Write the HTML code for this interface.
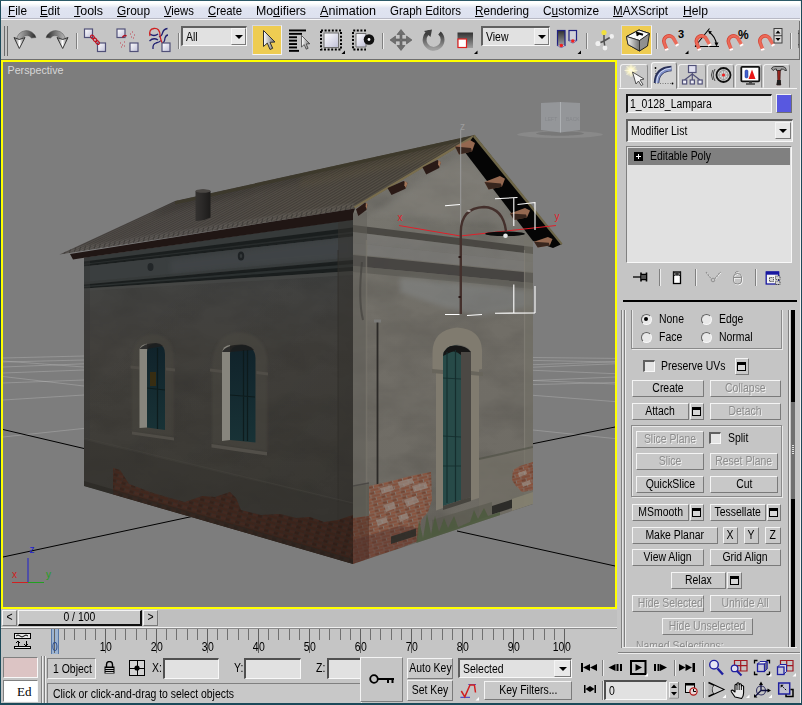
<!DOCTYPE html><html><head><meta charset="utf-8"><title>3ds Max</title><style>
html,body{margin:0;padding:0;}
body{width:802px;height:705px;overflow:hidden;background:#c5c5c5;font-family:"Liberation Sans",sans-serif;font-size:11px;color:#000;position:relative;}
.a{position:absolute;box-sizing:border-box;}
.t{position:absolute;white-space:nowrap;line-height:1;transform:scaleX(.87);transform-origin:0 0;}
.sx{display:inline-block;transform:scaleX(.87);transform-origin:50% 50%;}
.menu{transform:scaleX(.91);}
.btn{position:absolute;box-sizing:border-box;background:#c8c8c8;border:1px solid;border-color:#f4f4f4 #7a7a7a #7a7a7a #f4f4f4;text-align:center;white-space:nowrap;font-size:12px;}
.btn.dis{color:#8c8c8c;text-shadow:1px 1px 0 #f0f0f0;}
.fld{position:absolute;box-sizing:border-box;background:#e1e1e1;border:1px solid;border-color:#505050 #f8f8f8 #f8f8f8 #505050;}
.grp{position:absolute;box-sizing:border-box;border:1px solid #8a8a8a;box-shadow:1px 1px 0 #e8e8e8, inset 1px 1px 0 #e8e8e8;}
.vs{position:absolute;width:1px;background:#808080;box-shadow:1px 0 0 #ececec;}
u{text-decoration:underline;}
</style></head><body>
<div class="a" style="left:0;top:0;width:802px;height:21px;background:linear-gradient(#ffffff 0,#ffffff 3px,#eef1f7 6px,#e0e4f1 8px,#dde1ef 18.500px,#b9bac6 18.500px,#b9bac6 19.500px,#f6f6f8 19.500px,#f6f6f8 20.500px,#c5c5c5 20.500px);"></div>
<span class="t" style="left:8px;top:4px;font-size:13px;transform:scaleX(0.905);"><u>F</u>ile</span>
<span class="t" style="left:40px;top:4px;font-size:13px;transform:scaleX(0.892);"><u>E</u>dit</span>
<span class="t" style="left:74px;top:4px;font-size:13px;transform:scaleX(0.956);"><u>T</u>ools</span>
<span class="t" style="left:117px;top:4px;font-size:13px;transform:scaleX(0.913);"><u>G</u>roup</span>
<span class="t" style="left:164px;top:4px;font-size:13px;transform:scaleX(0.869);"><u>V</u>iews</span>
<span class="t" style="left:208px;top:4px;font-size:13px;transform:scaleX(0.872);"><u>C</u>reate</span>
<span class="t" style="left:256px;top:4px;font-size:13px;transform:scaleX(0.948);">Mo<u>d</u>ifiers</span>
<span class="t" style="left:320px;top:4px;font-size:13px;transform:scaleX(0.969);"><u>A</u>nimation</span>
<span class="t" style="left:390px;top:4px;font-size:13px;transform:scaleX(0.885);">Graph Editors</span>
<span class="t" style="left:475px;top:4px;font-size:13px;transform:scaleX(0.9);"><u>R</u>endering</span>
<span class="t" style="left:543px;top:4px;font-size:13px;transform:scaleX(0.912);">C<u>u</u>stomize</span>
<span class="t" style="left:613px;top:4px;font-size:13px;transform:scaleX(0.895);"><u>M</u>AXScript</span>
<span class="t" style="left:683px;top:4px;font-size:13px;transform:scaleX(0.936);"><u>H</u>elp</span>
<div class="a" style="left:0;top:21px;width:802px;height:39px;background:#c5c5c5;border-bottom:1px solid #6e6e6e;"></div>
<div class="a" style="left:4px;top:26px;width:1px;height:30px;background:#6a6a6a;"></div><div class="a" style="left:7px;top:26px;width:1px;height:30px;background:#6a6a6a;"></div>
<div id="vp" class="a" style="left:1px;top:60px;width:616px;height:549px;border:2px solid #ffff00;background:#7d7d7d;overflow:hidden;">
<svg class="a" style="left:0;top:0;" width="612" height="545" viewBox="3 62 612 545">
<defs>
<linearGradient id="rf" gradientUnits="userSpaceOnUse" x1="60" y1="250" x2="470" y2="150"><stop offset="0" stop-color="#504c4a"/><stop offset="0.3" stop-color="#4e4a48"/><stop offset="0.55" stop-color="#504b45"/><stop offset="0.8" stop-color="#4f4a42"/><stop offset="1" stop-color="#504a40"/></linearGradient>
<linearGradient id="lw" gradientUnits="userSpaceOnUse" x1="0" y1="260" x2="0" y2="560"><stop offset="0" stop-color="#3c3e3e"/><stop offset="0.1" stop-color="#434341"/><stop offset="0.3" stop-color="#43413d"/><stop offset="0.7" stop-color="#3f3d38"/><stop offset="1" stop-color="#3d3b36"/></linearGradient>
<linearGradient id="fw" gradientUnits="userSpaceOnUse" x1="0" y1="140" x2="0" y2="560"><stop offset="0" stop-color="#7c7a74"/><stop offset="0.25" stop-color="#75736c"/><stop offset="0.45" stop-color="#716e67"/><stop offset="0.8" stop-color="#6f6c65"/><stop offset="1" stop-color="#6b6861"/></linearGradient>
<linearGradient id="lwh" gradientUnits="userSpaceOnUse" x1="150" y1="280" x2="353" y2="470"><stop offset="0" stop-color="#000" stop-opacity="0"/><stop offset="0.45" stop-color="#000" stop-opacity="0.03"/><stop offset="1" stop-color="#000" stop-opacity="0.1"/></linearGradient><linearGradient id="brd" gradientUnits="userSpaceOnUse" x1="113" y1="0" x2="353" y2="0"><stop offset="0" stop-color="#000" stop-opacity="0"/><stop offset="1" stop-color="#000" stop-opacity="0.15"/></linearGradient><linearGradient id="chim" x1="0" y1="0" x2="1" y2="0"><stop offset="0" stop-color="#343230"/><stop offset="0.4" stop-color="#2c2a29"/><stop offset="1" stop-color="#1c1b1a"/></linearGradient>
<linearGradient id="glass" x1="0" y1="0" x2="0" y2="1"><stop offset="0" stop-color="#10222a"/><stop offset="1" stop-color="#183236"/></linearGradient>
<pattern id="brk" width="10" height="6" patternUnits="userSpaceOnUse" patternTransform="rotate(-14)"><rect width="10" height="6" fill="#857f78"/><rect x="0.400" y="0.400" width="9" height="2.400" fill="#84503c"/><rect x="-5" y="3.400" width="9" height="2.400" fill="#744432"/><rect x="5" y="3.400" width="9" height="2.400" fill="#8c5640"/></pattern>
<pattern id="brkL" width="10" height="6" patternUnits="userSpaceOnUse" patternTransform="rotate(16)"><rect width="10" height="6" fill="#3a2e28"/><rect x="0.400" y="0.400" width="9" height="2.400" fill="#48281e"/><rect x="-5" y="3.400" width="9" height="2.400" fill="#3c221a"/><rect x="5" y="3.400" width="9" height="2.400" fill="#4e2c22"/></pattern>
<filter id="nz" x="0" y="0" width="100%" height="100%"><feTurbulence type="fractalNoise" baseFrequency="0.02 0.035" numOctaves="4" seed="7" result="n"/><feColorMatrix in="n" type="matrix" values="0 0 0 0 0  0 0 0 0 0  0 0 0 0 0  1.2 0 0 0 -0.42"/><feComposite operator="in" in2="SourceGraphic"/></filter>
<filter id="bl1"><feGaussianBlur stdDeviation="1.2"/></filter>
<filter id="bl2"><feGaussianBlur stdDeviation="2.5"/></filter>
<filter id="bl05"><feGaussianBlur stdDeviation="0.6"/></filter>
<clipPath id="cFW"><path d="M353 214 L355 208.500 L472 139 L464 150 L533 240 L533 504 L353 564 Z"/></clipPath>
<clipPath id="cLW"><path d="M84 257.700 L353 219.600 L353 564 L84 486 Z"/></clipPath>
<clipPath id="cRF"><path d="M59.500 254.500 L175 201 L474.500 135 L472 139 L355 208.500 Z"/></clipPath>
</defs>
<rect x="3" y="62" width="612" height="545" fill="#7d7d7d"/>
<path d="M3 358 L84 356" stroke="#c0c0c0" stroke-width="0.800" opacity="0.45" fill="none"/>
<path d="M3 362 L84 360" stroke="#c0c0c0" stroke-width="0.800" opacity="0.45" fill="none"/>
<path d="M3 361 L84 367" stroke="#c0c0c0" stroke-width="0.800" opacity="0.45" fill="none"/>
<path d="M3 367 L84 363.8" stroke="#c0c0c0" stroke-width="0.800" opacity="0.45" fill="none"/>
<path d="M3 373 L84 370" stroke="#c0c0c0" stroke-width="0.800" opacity="0.45" fill="none"/>
<path d="M3 376.5 L84 386" stroke="#c0c0c0" stroke-width="0.800" opacity="0.45" fill="none"/>
<path d="M3 383 L84 380" stroke="#c0c0c0" stroke-width="0.800" opacity="0.45" fill="none"/>
<path d="M3 400 L84 395" stroke="#c0c0c0" stroke-width="0.800" opacity="0.45" fill="none"/>
<path d="M3 437 L84 428.4" stroke="#c0c0c0" stroke-width="0.800" opacity="0.45" fill="none"/>
<path d="M533 357.5 L615 358.4" stroke="#c0c0c0" stroke-width="0.800" opacity="0.45" fill="none"/>
<path d="M533 360.4 L615 362" stroke="#c0c0c0" stroke-width="0.800" opacity="0.45" fill="none"/>
<path d="M533 364.7 L615 361.8" stroke="#c0c0c0" stroke-width="0.800" opacity="0.45" fill="none"/>
<path d="M533 367.2 L615 363.8" stroke="#c0c0c0" stroke-width="0.800" opacity="0.45" fill="none"/>
<path d="M533 370.3 L615 373.7" stroke="#c0c0c0" stroke-width="0.800" opacity="0.45" fill="none"/>
<path d="M533 380.5 L615 377" stroke="#c0c0c0" stroke-width="0.800" opacity="0.45" fill="none"/>
<path d="M533 384.6 L615 382.5" stroke="#c0c0c0" stroke-width="0.800" opacity="0.45" fill="none"/>
<path d="M533 380.5 L615 384" stroke="#c0c0c0" stroke-width="0.800" opacity="0.45" fill="none"/>
<path d="M533 395.3 L615 401.6" stroke="#c0c0c0" stroke-width="0.800" opacity="0.45" fill="none"/>
<path d="M533 430 L615 438.6" stroke="#c0c0c0" stroke-width="0.800" opacity="0.45" fill="none"/>
<path d="M3 429.500 L84 448.500 M3 557 L192 516.500 M457 531 L615 566 M533 443.700 L615 427" stroke="#000" stroke-width="1" fill="none"/>
<ellipse cx="560" cy="134.500" rx="43" ry="3.500" fill="#8c8c8c" opacity="0.8" filter="url(#bl05)"/><ellipse cx="560" cy="133.500" rx="24" ry="2.200" fill="#747474" opacity="0.8" filter="url(#bl05)"/>
<path d="M541 103 L560.500 102 L580 103 L580 130 L560.500 132.500 L541 130 Z" fill="#9a9ca0" opacity="0.8"/><path d="M560.500 102 V132.500" stroke="#b4b6ba" stroke-width="0.800"/><path d="M541 104 L562 107 L581 104" stroke="#a8a8a8" stroke-width="0.600" fill="none" opacity="0"/>
<text x="545" y="121" font-family="Liberation Sans,sans-serif" font-size="5" fill="#84868a" opacity="0.9">LEFT</text><text x="566" y="121" font-family="Liberation Sans,sans-serif" font-size="5" fill="#84868a" opacity="0.9">BACK</text>
<path d="M59.500 254.500 L175 201 L474.500 135 L472 139 L355 208.500 Z" fill="url(#rf)"/>
<g clip-path="url(#cRF)">
<path d="M178.3 200.3 L62.8 254.0" stroke="#2c2824" stroke-width="1.200" opacity="0.3"/>
<path d="M181.7 199.5 L66.1 253.5" stroke="#6e685a" stroke-width="1.200" opacity="0.2"/>
<path d="M185.0 198.8 L69.3 253.0" stroke="#2c2824" stroke-width="1.200" opacity="0.3"/>
<path d="M188.3 198.1 L72.6 252.5" stroke="#6e685a" stroke-width="1.200" opacity="0.2"/>
<path d="M191.6 197.3 L75.9 251.9" stroke="#2c2824" stroke-width="1.200" opacity="0.3"/>
<path d="M195.0 196.6 L79.2 251.4" stroke="#6e685a" stroke-width="1.200" opacity="0.2"/>
<path d="M198.3 195.9 L82.5 250.9" stroke="#2c2824" stroke-width="1.200" opacity="0.3"/>
<path d="M201.6 195.1 L85.8 250.4" stroke="#6e685a" stroke-width="1.200" opacity="0.2"/>
<path d="M204.9 194.4 L89.0 249.9" stroke="#2c2824" stroke-width="1.200" opacity="0.3"/>
<path d="M208.3 193.7 L92.3 249.4" stroke="#6e685a" stroke-width="1.200" opacity="0.2"/>
<path d="M211.6 192.9 L95.6 248.9" stroke="#2c2824" stroke-width="1.200" opacity="0.3"/>
<path d="M214.9 192.2 L98.9 248.4" stroke="#6e685a" stroke-width="1.200" opacity="0.2"/>
<path d="M218.3 191.5 L102.2 247.9" stroke="#2c2824" stroke-width="1.200" opacity="0.3"/>
<path d="M221.6 190.7 L105.5 247.3" stroke="#6e685a" stroke-width="1.200" opacity="0.2"/>
<path d="M224.9 190.0 L108.8 246.8" stroke="#2c2824" stroke-width="1.200" opacity="0.3"/>
<path d="M228.2 189.3 L112.0 246.3" stroke="#6e685a" stroke-width="1.200" opacity="0.2"/>
<path d="M231.6 188.5 L115.3 245.8" stroke="#2c2824" stroke-width="1.200" opacity="0.3"/>
<path d="M234.9 187.8 L118.6 245.3" stroke="#6e685a" stroke-width="1.200" opacity="0.2"/>
<path d="M238.2 187.1 L121.9 244.8" stroke="#2c2824" stroke-width="1.200" opacity="0.3"/>
<path d="M241.6 186.3 L125.2 244.3" stroke="#6e685a" stroke-width="1.200" opacity="0.2"/>
<path d="M244.9 185.6 L128.4 243.8" stroke="#2c2824" stroke-width="1.200" opacity="0.3"/>
<path d="M248.2 184.9 L131.7 243.3" stroke="#6e685a" stroke-width="1.200" opacity="0.2"/>
<path d="M251.5 184.1 L135.0 242.7" stroke="#2c2824" stroke-width="1.200" opacity="0.3"/>
<path d="M254.9 183.4 L138.3 242.2" stroke="#6e685a" stroke-width="1.200" opacity="0.2"/>
<path d="M258.2 182.7 L141.6 241.7" stroke="#2c2824" stroke-width="1.200" opacity="0.3"/>
<path d="M261.5 181.9 L144.9 241.2" stroke="#6e685a" stroke-width="1.200" opacity="0.2"/>
<path d="M264.9 181.2 L148.1 240.7" stroke="#2c2824" stroke-width="1.200" opacity="0.3"/>
<path d="M268.2 180.5 L151.4 240.2" stroke="#6e685a" stroke-width="1.200" opacity="0.2"/>
<path d="M271.5 179.7 L154.7 239.7" stroke="#2c2824" stroke-width="1.200" opacity="0.3"/>
<path d="M274.8 179.0 L158.0 239.2" stroke="#6e685a" stroke-width="1.200" opacity="0.2"/>
<path d="M278.2 178.3 L161.3 238.7" stroke="#2c2824" stroke-width="1.200" opacity="0.3"/>
<path d="M281.5 177.5 L164.6 238.1" stroke="#6e685a" stroke-width="1.200" opacity="0.2"/>
<path d="M284.8 176.8 L167.8 237.6" stroke="#2c2824" stroke-width="1.200" opacity="0.3"/>
<path d="M288.1 176.1 L171.1 237.1" stroke="#6e685a" stroke-width="1.200" opacity="0.2"/>
<path d="M291.5 175.3 L174.4 236.6" stroke="#2c2824" stroke-width="1.200" opacity="0.3"/>
<path d="M294.8 174.6 L177.7 236.1" stroke="#6e685a" stroke-width="1.200" opacity="0.2"/>
<path d="M298.1 173.9 L181.0 235.6" stroke="#2c2824" stroke-width="1.200" opacity="0.3"/>
<path d="M301.5 173.1 L184.3 235.1" stroke="#6e685a" stroke-width="1.200" opacity="0.2"/>
<path d="M304.8 172.4 L187.6 234.6" stroke="#2c2824" stroke-width="1.200" opacity="0.3"/>
<path d="M308.1 171.7 L190.8 234.1" stroke="#6e685a" stroke-width="1.200" opacity="0.2"/>
<path d="M311.4 170.9 L194.1 233.5" stroke="#2c2824" stroke-width="1.200" opacity="0.3"/>
<path d="M314.8 170.2 L197.4 233.0" stroke="#6e685a" stroke-width="1.200" opacity="0.2"/>
<path d="M318.1 169.5 L200.7 232.5" stroke="#2c2824" stroke-width="1.200" opacity="0.3"/>
<path d="M321.4 168.7 L204.0 232.0" stroke="#6e685a" stroke-width="1.200" opacity="0.2"/>
<path d="M324.8 168.0 L207.2 231.5" stroke="#2c2824" stroke-width="1.200" opacity="0.3"/>
<path d="M328.1 167.3 L210.5 231.0" stroke="#6e685a" stroke-width="1.200" opacity="0.2"/>
<path d="M331.4 166.5 L213.8 230.5" stroke="#2c2824" stroke-width="1.200" opacity="0.3"/>
<path d="M334.7 165.8 L217.1 230.0" stroke="#6e685a" stroke-width="1.200" opacity="0.2"/>
<path d="M338.1 165.1 L220.4 229.5" stroke="#2c2824" stroke-width="1.200" opacity="0.3"/>
<path d="M341.4 164.3 L223.7 228.9" stroke="#6e685a" stroke-width="1.200" opacity="0.2"/>
<path d="M344.7 163.6 L226.9 228.4" stroke="#2c2824" stroke-width="1.200" opacity="0.3"/>
<path d="M348.0 162.9 L230.2 227.9" stroke="#6e685a" stroke-width="1.200" opacity="0.2"/>
<path d="M351.4 162.1 L233.5 227.4" stroke="#2c2824" stroke-width="1.200" opacity="0.3"/>
<path d="M354.7 161.4 L236.8 226.9" stroke="#6e685a" stroke-width="1.200" opacity="0.2"/>
<path d="M358.0 160.7 L240.1 226.4" stroke="#2c2824" stroke-width="1.200" opacity="0.3"/>
<path d="M361.4 159.9 L243.4 225.9" stroke="#6e685a" stroke-width="1.200" opacity="0.2"/>
<path d="M364.7 159.2 L246.6 225.4" stroke="#2c2824" stroke-width="1.200" opacity="0.3"/>
<path d="M368.0 158.5 L249.9 224.9" stroke="#6e685a" stroke-width="1.200" opacity="0.2"/>
<path d="M371.3 157.7 L253.2 224.3" stroke="#2c2824" stroke-width="1.200" opacity="0.3"/>
<path d="M374.7 157.0 L256.5 223.8" stroke="#6e685a" stroke-width="1.200" opacity="0.2"/>
<path d="M378.0 156.3 L259.8 223.3" stroke="#2c2824" stroke-width="1.200" opacity="0.3"/>
<path d="M381.3 155.5 L263.1 222.8" stroke="#6e685a" stroke-width="1.200" opacity="0.2"/>
<path d="M384.6 154.8 L266.4 222.3" stroke="#2c2824" stroke-width="1.200" opacity="0.3"/>
<path d="M388.0 154.1 L269.6 221.8" stroke="#6e685a" stroke-width="1.200" opacity="0.2"/>
<path d="M391.3 153.3 L272.9 221.3" stroke="#2c2824" stroke-width="1.200" opacity="0.3"/>
<path d="M394.6 152.6 L276.2 220.8" stroke="#6e685a" stroke-width="1.200" opacity="0.2"/>
<path d="M398.0 151.9 L279.5 220.3" stroke="#2c2824" stroke-width="1.200" opacity="0.3"/>
<path d="M401.3 151.1 L282.8 219.7" stroke="#6e685a" stroke-width="1.200" opacity="0.2"/>
<path d="M404.6 150.4 L286.1 219.2" stroke="#2c2824" stroke-width="1.200" opacity="0.3"/>
<path d="M407.9 149.7 L289.3 218.7" stroke="#6e685a" stroke-width="1.200" opacity="0.2"/>
<path d="M411.3 148.9 L292.6 218.2" stroke="#2c2824" stroke-width="1.200" opacity="0.3"/>
<path d="M414.6 148.2 L295.9 217.7" stroke="#6e685a" stroke-width="1.200" opacity="0.2"/>
<path d="M417.9 147.5 L299.2 217.2" stroke="#2c2824" stroke-width="1.200" opacity="0.3"/>
<path d="M421.3 146.7 L302.5 216.7" stroke="#6e685a" stroke-width="1.200" opacity="0.2"/>
<path d="M424.6 146.0 L305.8 216.2" stroke="#2c2824" stroke-width="1.200" opacity="0.3"/>
<path d="M427.9 145.3 L309.0 215.7" stroke="#6e685a" stroke-width="1.200" opacity="0.2"/>
<path d="M431.2 144.5 L312.3 215.1" stroke="#2c2824" stroke-width="1.200" opacity="0.3"/>
<path d="M434.6 143.8 L315.6 214.6" stroke="#6e685a" stroke-width="1.200" opacity="0.2"/>
<path d="M437.9 143.1 L318.9 214.1" stroke="#2c2824" stroke-width="1.200" opacity="0.3"/>
<path d="M441.2 142.3 L322.2 213.6" stroke="#6e685a" stroke-width="1.200" opacity="0.2"/>
<path d="M444.6 141.6 L325.4 213.1" stroke="#2c2824" stroke-width="1.200" opacity="0.3"/>
<path d="M447.9 140.9 L328.7 212.6" stroke="#6e685a" stroke-width="1.200" opacity="0.2"/>
<path d="M451.2 140.1 L332.0 212.1" stroke="#2c2824" stroke-width="1.200" opacity="0.3"/>
<path d="M454.5 139.4 L335.3 211.6" stroke="#6e685a" stroke-width="1.200" opacity="0.2"/>
<path d="M457.9 138.7 L338.6 211.1" stroke="#2c2824" stroke-width="1.200" opacity="0.3"/>
<path d="M461.2 137.9 L341.9 210.5" stroke="#6e685a" stroke-width="1.200" opacity="0.2"/>
<path d="M464.5 137.2 L345.1 210.0" stroke="#2c2824" stroke-width="1.200" opacity="0.3"/>
<path d="M467.8 136.5 L348.4 209.5" stroke="#6e685a" stroke-width="1.200" opacity="0.2"/>
<path d="M471.2 135.7 L351.7 209.0" stroke="#2c2824" stroke-width="1.200" opacity="0.3"/>
<path d="M300 170 L474 134 L440 158 L300 188 Z" fill="#7a6a40" opacity="0.12" filter="url(#bl2)"/>
<path d="M175 199 L474 133 L440 150 L150 216 Z" fill="#000" opacity="0.12" filter="url(#bl2)"/>
<path d="M59 257 L355 211 L354 203 L72 248 Z" fill="#fff" opacity="0.07" filter="url(#bl1)"/>
<path d="M175 201 L474.500 135 L474.500 138.500 L175 204.500 Z" fill="#3c382a" opacity="0.85"/>
<path d="M59.5 254.5 l1.500 -4.500" stroke="#2e2c2a" stroke-width="1.100" opacity="0.5"/>
<path d="M64.4 253.7 l1.500 -4.500" stroke="#2e2c2a" stroke-width="1.100" opacity="0.5"/>
<path d="M69.3 253.0 l1.500 -4.500" stroke="#2e2c2a" stroke-width="1.100" opacity="0.5"/>
<path d="M74.3 252.2 l1.500 -4.500" stroke="#2e2c2a" stroke-width="1.100" opacity="0.5"/>
<path d="M79.2 251.4 l1.500 -4.500" stroke="#2e2c2a" stroke-width="1.100" opacity="0.5"/>
<path d="M84.1 250.7 l1.500 -4.500" stroke="#2e2c2a" stroke-width="1.100" opacity="0.5"/>
<path d="M89.0 249.9 l1.500 -4.500" stroke="#2e2c2a" stroke-width="1.100" opacity="0.5"/>
<path d="M94.0 249.1 l1.500 -4.500" stroke="#2e2c2a" stroke-width="1.100" opacity="0.5"/>
<path d="M98.9 248.4 l1.500 -4.500" stroke="#2e2c2a" stroke-width="1.100" opacity="0.5"/>
<path d="M103.8 247.6 l1.500 -4.500" stroke="#2e2c2a" stroke-width="1.100" opacity="0.5"/>
<path d="M108.8 246.8 l1.500 -4.500" stroke="#2e2c2a" stroke-width="1.100" opacity="0.5"/>
<path d="M113.7 246.1 l1.500 -4.500" stroke="#2e2c2a" stroke-width="1.100" opacity="0.5"/>
<path d="M118.6 245.3 l1.500 -4.500" stroke="#2e2c2a" stroke-width="1.100" opacity="0.5"/>
<path d="M123.5 244.5 l1.500 -4.500" stroke="#2e2c2a" stroke-width="1.100" opacity="0.5"/>
<path d="M128.4 243.8 l1.500 -4.500" stroke="#2e2c2a" stroke-width="1.100" opacity="0.5"/>
<path d="M133.4 243.0 l1.500 -4.500" stroke="#2e2c2a" stroke-width="1.100" opacity="0.5"/>
<path d="M138.3 242.2 l1.500 -4.500" stroke="#2e2c2a" stroke-width="1.100" opacity="0.5"/>
<path d="M143.2 241.5 l1.500 -4.500" stroke="#2e2c2a" stroke-width="1.100" opacity="0.5"/>
<path d="M148.1 240.7 l1.500 -4.500" stroke="#2e2c2a" stroke-width="1.100" opacity="0.5"/>
<path d="M153.1 239.9 l1.500 -4.500" stroke="#2e2c2a" stroke-width="1.100" opacity="0.5"/>
<path d="M158.0 239.2 l1.500 -4.500" stroke="#2e2c2a" stroke-width="1.100" opacity="0.5"/>
<path d="M162.9 238.4 l1.500 -4.500" stroke="#2e2c2a" stroke-width="1.100" opacity="0.5"/>
<path d="M167.8 237.6 l1.500 -4.500" stroke="#2e2c2a" stroke-width="1.100" opacity="0.5"/>
<path d="M172.8 236.9 l1.500 -4.500" stroke="#2e2c2a" stroke-width="1.100" opacity="0.5"/>
<path d="M177.7 236.1 l1.500 -4.500" stroke="#2e2c2a" stroke-width="1.100" opacity="0.5"/>
<path d="M182.6 235.3 l1.500 -4.500" stroke="#2e2c2a" stroke-width="1.100" opacity="0.5"/>
<path d="M187.6 234.6 l1.500 -4.500" stroke="#2e2c2a" stroke-width="1.100" opacity="0.5"/>
<path d="M192.5 233.8 l1.500 -4.500" stroke="#2e2c2a" stroke-width="1.100" opacity="0.5"/>
<path d="M197.4 233.0 l1.500 -4.500" stroke="#2e2c2a" stroke-width="1.100" opacity="0.5"/>
<path d="M202.3 232.3 l1.500 -4.500" stroke="#2e2c2a" stroke-width="1.100" opacity="0.5"/>
<path d="M207.2 231.5 l1.500 -4.500" stroke="#2e2c2a" stroke-width="1.100" opacity="0.5"/>
<path d="M212.2 230.7 l1.500 -4.500" stroke="#2e2c2a" stroke-width="1.100" opacity="0.5"/>
<path d="M217.1 230.0 l1.500 -4.500" stroke="#2e2c2a" stroke-width="1.100" opacity="0.5"/>
<path d="M222.0 229.2 l1.500 -4.500" stroke="#2e2c2a" stroke-width="1.100" opacity="0.5"/>
<path d="M226.9 228.4 l1.500 -4.500" stroke="#2e2c2a" stroke-width="1.100" opacity="0.5"/>
<path d="M231.9 227.7 l1.500 -4.500" stroke="#2e2c2a" stroke-width="1.100" opacity="0.5"/>
<path d="M236.8 226.9 l1.500 -4.500" stroke="#2e2c2a" stroke-width="1.100" opacity="0.5"/>
<path d="M241.7 226.1 l1.500 -4.500" stroke="#2e2c2a" stroke-width="1.100" opacity="0.5"/>
<path d="M246.6 225.4 l1.500 -4.500" stroke="#2e2c2a" stroke-width="1.100" opacity="0.5"/>
<path d="M251.6 224.6 l1.500 -4.500" stroke="#2e2c2a" stroke-width="1.100" opacity="0.5"/>
<path d="M256.5 223.8 l1.500 -4.500" stroke="#2e2c2a" stroke-width="1.100" opacity="0.5"/>
<path d="M261.4 223.1 l1.500 -4.500" stroke="#2e2c2a" stroke-width="1.100" opacity="0.5"/>
<path d="M266.4 222.3 l1.500 -4.500" stroke="#2e2c2a" stroke-width="1.100" opacity="0.5"/>
<path d="M271.3 221.5 l1.500 -4.500" stroke="#2e2c2a" stroke-width="1.100" opacity="0.5"/>
<path d="M276.2 220.8 l1.500 -4.500" stroke="#2e2c2a" stroke-width="1.100" opacity="0.5"/>
<path d="M281.1 220.0 l1.500 -4.500" stroke="#2e2c2a" stroke-width="1.100" opacity="0.5"/>
<path d="M286.1 219.2 l1.500 -4.500" stroke="#2e2c2a" stroke-width="1.100" opacity="0.5"/>
<path d="M291.0 218.5 l1.500 -4.500" stroke="#2e2c2a" stroke-width="1.100" opacity="0.5"/>
<path d="M295.9 217.7 l1.500 -4.500" stroke="#2e2c2a" stroke-width="1.100" opacity="0.5"/>
<path d="M300.8 216.9 l1.500 -4.500" stroke="#2e2c2a" stroke-width="1.100" opacity="0.5"/>
<path d="M305.8 216.2 l1.500 -4.500" stroke="#2e2c2a" stroke-width="1.100" opacity="0.5"/>
<path d="M310.7 215.4 l1.500 -4.500" stroke="#2e2c2a" stroke-width="1.100" opacity="0.5"/>
<path d="M315.6 214.6 l1.500 -4.500" stroke="#2e2c2a" stroke-width="1.100" opacity="0.5"/>
<path d="M320.5 213.9 l1.500 -4.500" stroke="#2e2c2a" stroke-width="1.100" opacity="0.5"/>
<path d="M325.4 213.1 l1.500 -4.500" stroke="#2e2c2a" stroke-width="1.100" opacity="0.5"/>
<path d="M330.4 212.3 l1.500 -4.500" stroke="#2e2c2a" stroke-width="1.100" opacity="0.5"/>
<path d="M335.3 211.6 l1.500 -4.500" stroke="#2e2c2a" stroke-width="1.100" opacity="0.5"/>
<path d="M340.2 210.8 l1.500 -4.500" stroke="#2e2c2a" stroke-width="1.100" opacity="0.5"/>
<path d="M345.1 210.0 l1.500 -4.500" stroke="#2e2c2a" stroke-width="1.100" opacity="0.5"/>
<path d="M350.1 209.3 l1.500 -4.500" stroke="#2e2c2a" stroke-width="1.100" opacity="0.5"/>
</g>
<path d="M355 208.500 L472 139 L474.500 135.500 L472.500 135.800 L354 206.500 Z" fill="#7e7250" opacity="0.9"/>
<path d="M195.500 191 Q203 188 210.500 191 L210.500 217.500 Q203 221.500 195.500 221 Z" fill="url(#chim)"/><ellipse cx="203" cy="191" rx="7.500" ry="1.800" fill="#4a4744"/>
<path d="M84 257.700 L353 219.600 L353 564 L84 486 Z" fill="url(#lw)"/>
<g clip-path="url(#cLW)">
<rect x="84" y="212" width="270" height="352" fill="url(#lwh)"/>
<rect x="84" y="212" width="270" height="352" fill="#2a2824" filter="url(#nz)" opacity="0.15"/>
<path d="M84 257.700 L353 219.600 L353 227.500 L84 261.600 Z" fill="#363a3a"/>
<path d="M84 261.600 L353 227.500 L353 236.500 L84 266.500 Z" fill="#1a1e1e"/>
<path d="M84 263.800 L353 231.500 L353 233.500 L84 264.800 Z" fill="#2c3030" opacity="0.8"/>
<path d="M84 266.500 L353 236.500 L353 257.400 L84 281.900 Z" fill="#3a3e3f"/>
<path d="M84 281.900 L353 257.400 L353 260 L84 284.400 Z" fill="#363a3a"/>
<path d="M84 284.400 L353 260 L353 271 L84 288.500 Z" fill="#1a1e1e"/>
<path d="M84 286 L353 264 L353 267 L84 287.200 Z" fill="#303434" opacity="0.8"/>
<path d="M84 288.500 L353 271 L353 275 L84 291 Z" fill="#484a48" opacity="0.6"/>
<path d="M170 260 L353 236.500 L353 257.400 L170 274 Z" fill="#4c5052" opacity="0.35" filter="url(#bl2)"/>
<ellipse cx="150.500" cy="267" rx="3" ry="4" fill="#222628"/><ellipse cx="241" cy="256" rx="3.200" ry="4.500" fill="#1e2224"/><ellipse cx="241" cy="256" rx="1.300" ry="2" fill="#34393a"/>
<path d="M338 221.700 L353 219.600 L353 564 L338 560 Z" fill="#34322e" opacity="0.5"/>
<path d="M338 250 V560" stroke="#2e2c28" stroke-width="1" opacity="0.7"/>
<path d="M84 257.700 L90 256.800 L90 488 L84 486 Z" fill="#363836" opacity="0.4"/>
<path d="M132 362 Q132 336 152 334 Q173.500 335 173.500 358 L173.500 437 L132 431 Z" fill="#4a4741" opacity="0.5" filter="url(#bl1)"/>
<path d="M212 372 Q211 334 239 332 Q268 334 267.500 366 L267.500 452 L212 444 Z" fill="#4b4842" opacity="0.5" filter="url(#bl1)"/>
<path d="M84 440 L353 505 L353 564 L84 486 Z" fill="#34322e" opacity="0.5"/>
<path d="M84 438 L353 503" stroke="#4a4842" stroke-width="1.200" opacity="0.35"/>
<path d="M113 468 L120 470 L129 484 L150 492 L170 498 L185 502 L202 496 L215 497 L230 492 L236 498 L241 510 L261 515 L280 514 L296 518 L310 517 L324 522 L338 520 L353 515 L353 564 L113 494.500 Z" fill="url(#brkL)"/>
<path d="M113 468 L120 470 L129 484 L150 492 L170 498 L185 502 L202 496 L215 497 L230 492 L236 498 L241 510 L261 515 L280 514 L296 518 L310 517 L324 522 L338 520 L353 515 L353 564 L113 494.500 Z" fill="#2a2420" opacity="0.1"/>
<path d="M113 468 L120 470 L129 484 L150 492 L170 498 L185 502 L202 496 L215 497 L230 492 L236 498 L241 510 L261 515 L280 514 L296 518 L310 517 L324 522 L338 520 L353 515 L353 564 L113 494.500 Z" fill="url(#brd)"/>
<path d="M84 486 L353 564 L353 559 L84 481 Z" fill="#262420" opacity="0.5"/>
</g>
<path d="M70 254 L355 208.500 L367 211 L366.500 216 L356 219.500 L84 257.700 L73 259.500 Z" fill="#201614"/>
<path d="M130.500 365.500 L139.500 366.500 L139.500 369.500 L130.500 368.500 Z M166 367.500 L175 368.500 L175 371.500 L166 370.500 Z" fill="#4e4b45"/>
<path d="M147 352 Q147 343.500 156 343.500 Q165 344.500 165 354 L165 430 L147 427.500 Z" fill="url(#glass)"/>
<path d="M139.500 349 Q141 344.500 147 343.800 L147 427.500 L139.500 428 Z" fill="#87857d"/>
<path d="M139.500 349 Q144 343 156 343 Q160 343 163 346 L147 349 Z" fill="#1e1e1e" opacity="0.85"/>
<rect x="150" y="372" width="6" height="14" fill="#3c2e10" opacity="0.9"/><path d="M157.500 348 V429 M147 388 L165 390" stroke="#0c1818" stroke-width="1.200" opacity="0.8"/>
<path d="M132 431.500 L174 437.500 L174 440.500 L132 434.500 Z" fill="#504d47"/>
<path d="M210 368.500 L222 370 L222 373 L210 371.500 Z M256.500 371 L268 372.500 L268 375.500 L256.500 374 Z" fill="#504d47"/>
<path d="M230 355 Q230 345 242 345 Q255 346 255.500 358 L255.500 442.500 L230 440 Z" fill="url(#glass)"/>
<path d="M222 352 Q223 346 230 345 L230 440 L222 441 Z" fill="#87857d"/>
<path d="M222 352 Q226 344.500 242 344.500 Q250 345 254 350 L230 352 Z" fill="#1c1c1c" opacity="0.85"/>
<path d="M243.500 350 V441 M247.500 350 V441 M230 395 L255 397" stroke="#0c1818" stroke-width="1.200" opacity="0.8"/>
<path d="M211.500 444 L267 452 L267 455.500 L211.500 447.500 Z" fill="#524f49"/>
<path d="M353 214 L355 208.500 L472 139 L464 150 L533 240 L533 504 L353 564 Z" fill="url(#fw)"/>
<g clip-path="url(#cFW)">
<rect x="353" y="135" width="181" height="430" fill="#45423c" filter="url(#nz)" opacity="0.18"/>
<path d="M370 215 L465 150 L520 225 Z" fill="#8a8882" opacity="0.3" filter="url(#bl2)"/>
<path d="M353 225 L533 247 L533 254 L353 232 Z" fill="#46443f" opacity="0.9"/>
<path d="M353 232 L533 254 L533 262 L353 243 Z" fill="#7d7e7e" opacity="0.4"/>
<path d="M353 243 L533 262 L533 272 L353 254 Z" fill="#7d7e7e" opacity="0.5"/>
<path d="M353 255 L533 273 L533 283 L353 266 Z" fill="#444240" opacity="0.95"/>
<path d="M353 266 L533 283 L533 289 L353 272 Z" fill="#5a5853" opacity="0.7"/>
<path d="M400 278 L533 290 L533 306 L480 316 L440 306 L400 292 Z" fill="#868a8c" opacity="0.45" filter="url(#bl2)"/>
<path d="M353 213 L367 212 L367 560 L353 564 Z" fill="#605e58" opacity="0.5"/>
<path d="M366.500 240 V520" stroke="#7e7a70" stroke-width="1.500" opacity="0.6"/>
<path d="M362 262 Q358 300 363 320" stroke="#403e3a" stroke-width="2" fill="none" opacity="0.6"/>
<path d="M524 240 L533 240 L533 504 L524 507 Z" fill="#76736a" opacity="0.5"/><path d="M524.500 250 V470" stroke="#86827a" stroke-width="1.200" opacity="0.6"/>
<path d="M377.500 322 V510" stroke="#2c2a28" stroke-width="1.800"/><path d="M374 321 h7" stroke="#7a7a78" stroke-width="3"/>
<path d="M353 487 L369 484 L369 517 L353 520 Z" fill="#5a5850" opacity="0.7"/>
<path d="M353 486 L369 483" stroke="#454340" stroke-width="1.500" opacity="0.8"/>
<path d="M479 459 L533 447 L533 504 L479 522 Z" fill="#747168" opacity="0.6"/><path d="M479 459 L533 447" stroke="#4a4c40" stroke-width="2" opacity="0.55"/>
<path d="M369 486 L378 484 L395 480 L410 476 L431 472 L432 500 L428 512 L421 520 L418 541 L400 548 L353 564 L353 518 L369 516 Z" fill="url(#brk)"/>
<path d="M369 486 L378 484 L395 480 L410 476 L431 472 L432 500 L428 512 L421 520 L418 541 L400 548 L353 564 L353 518 L369 516 Z" fill="#7a4a38" opacity="0.15"/>
<path d="M353 518 L369 516 L369 558 L353 564 Z" fill="#482a20" opacity="0.5"/>
<path d="M353 540 L400 526 L418 528 L418 541 L400 548 L353 564 Z" fill="#50302a" opacity="0.4"/>
<path d="M380 488 l12 -3 l2 5 l-12 4 z M398 482 l14 -4 l2 5 l-14 5 z M384 505 l10 -3 l2 6 l-10 4 z M404 500 l12 -4 l3 6 l-12 5 z M412 486 l14 -4 l2 6 l-14 4 z M376 520 l10 -3 l2 5 l-10 4 z M398 516 l9 -3 l2 5 l-9 4 z" fill="#9a948e" opacity="0.6" filter="url(#bl05)"/>
<path d="M391 536.500 L416 528.500 L416 536 L391 544 Z" fill="#2c2c28" opacity="0.9"/>
<path d="M492 506 L512 499.500 L512 508 L492 514.500 Z" fill="#262622" opacity="0.9"/>
<path d="M512 499 L533 492 L533 504 L512 511 Z" fill="#8a8674" opacity="0.7"/>
<path d="M432 520 L492 502 L492 515 L432 536 Z" fill="#55564a" opacity="0.55"/>
<path d="M513 470 L520 466 L533 462 L533 490 L522 492 L516 486 L512 480 Z" fill="url(#brk)"/><path d="M513 470 L520 466 L533 462 L533 490 L522 492 L516 486 L512 480 Z" fill="#7a3c2a" opacity="0.2"/>
<path d="M518 473 l8 -3 l1 4 l-8 3 z M522 483 l8 -3 l1 4 l-8 3 z" fill="#a09a92" opacity="0.6" filter="url(#bl05)"/>
<path d="M416 546 L419 520 L423 538 L427 514 L431 534 L435 516 L439 532 L444 518 L448 528 L454 516 L458 527 L470 522 L474 510 L478 519 L484 508 L488 516 L500 512 L500 518 L416 548 Z" fill="#4c5a3c" opacity="0.8" filter="url(#bl05)"/>
</g>
<path d="M432.500 371 L432.500 352 Q433 330 457 327.500 Q481 329 482 350 L482 369 L479 369.500 L479 498 L471 500.500 L471 352 Q468 345 457 344.500 Q445 346 443 354 L443 508 L436 510.500 L436 371 Z" fill="#807b6f"/>
<path d="M432 369 L443 370 L443 374 L432 373 Z M471 371 L483 372.500 L483 376 L471 375 Z" fill="#68655c"/>
<path d="M443 356 Q444 346 455 345.500 Q461 345.500 461 348 L461 500 L443 506 Z" fill="#274a48"/>
<path d="M443 356 Q444 346 455 345.500 Q466 345 471 352 L461 355 Q455 349 449 353 Z" fill="#161616"/>
<path d="M461 352 L471 352 L471 497 L461 500.500 Z" fill="#4b4844"/>
<path d="M447 352 V503 M455.500 350 V502" stroke="#142c2c" stroke-width="1.200" opacity="0.9"/><path d="M443 378 L461 379 M443 436 L461 437 M443 466 L461 466" stroke="#142c2c" stroke-width="1" opacity="0.8"/>
<path d="M443 506 L461 500 L471 497 L471 501 L443 510 Z" fill="#46443e"/>
<path d="M474.500 135 L562 244 L553 248 L533 241 L464 151 L470 141 Z" fill="#050505"/>
<path d="M474.500 134.500 L562.500 243.500 L561 245 L473 137 Z" fill="#6e6648"/>
<path d="M455 146.525 L470.0 140 L475 142.9 L472.0 151.6 L459.0 154.5 Z" fill="#946850"/>
<path d="M455 146.525 L459.0 154.5 L472.0 151.6 L471.0 147.975 Z" fill="#1a100e" opacity="0.75"/>
<path d="M484.5 182.075 L499.875 176 L505 178.7 L501.925 186.8 L488.6 189.5 Z" fill="#946850"/>
<path d="M484.5 182.075 L488.6 189.5 L501.925 186.8 L500.9 183.425 Z" fill="#1a100e" opacity="0.75"/>
<path d="M510 213.4 L525.0 208 L530 210.4 L527.0 217.6 L514.0 220 Z" fill="#946850"/>
<path d="M510 213.4 L514.0 220 L527.0 217.6 L526.0 214.6 Z" fill="#1a100e" opacity="0.75"/>
<path d="M534 241.725 L547.875 237 L552.5 239.1 L549.725 245.4 L537.7 247.5 Z" fill="#946850"/>
<path d="M534 241.725 L537.7 247.5 L549.725 245.4 L548.8 242.775 Z" fill="#1a100e" opacity="0.75"/>
<path d="M422.5 167.25 L437.3 160 L441 162.175 L439.15 167.975 L426.2 174.5 Z" fill="#2a1a16"/>
<path d="M438.41 160 L441 162.175 L439.52 167.25 L438.04 164.35 Z" fill="#a07458"/>
<path d="M387.5 188.0 L403.5 181 L407.5 183.1 L405.5 188.7 L391.5 195 Z" fill="#2a1a16"/>
<path d="M404.7 181 L407.5 183.1 L405.9 188.0 L404.3 185.2 Z" fill="#a07458"/>
<path d="M356 209.25 L365.2 202.5 L367.5 204.525 L366.35 209.925 L358.3 216 Z" fill="#2a1a16"/>
<path d="M365.89 202.5 L367.5 204.525 L366.58 209.25 L365.66 206.55 Z" fill="#a07458"/>
<path d="M460.700 130 V235" stroke="#9a9a9a" stroke-width="1"/>
<text x="460" y="130" font-family="Liberation Sans,sans-serif" font-size="10" fill="#9c9c9c">z</text>
<path d="M399 225.500 L460.500 236 L556 225.500" stroke="#e0202a" stroke-width="1" fill="none"/>
<text x="397.500" y="221" font-family="Liberation Sans,sans-serif" font-size="10" fill="#e0202a">x</text><text x="554.500" y="220" font-family="Liberation Sans,sans-serif" font-size="10" fill="#e0202a">y</text>
<path d="M460.800 314 V232 Q461 208 484 207 Q503 208 506 231" stroke="#44302c" stroke-width="2.400" fill="none"/>
<path d="M458.500 257 h2.500 M458.500 297 h2.500" stroke="#2a1a18" stroke-width="2"/>
<ellipse cx="505" cy="233.800" rx="20" ry="2.300" fill="#0a0a0a"/><circle cx="505.500" cy="235.800" r="2.300" fill="#e8e8e8"/>
<path d="M445 205.800 L460 204.500 M467.500 211 h3 M495 198.800 L517.500 197.500 M513.800 197.500 V226 M517.500 204.500 L535 202.500 V230 M445 314.500 H459.500 M467 315.500 L482 314.500 M495 313.200 L535 313 M513.800 284.500 V313 M535 286 V313" stroke="#fff" stroke-width="1.100" fill="none"/>
<text x="7.500" y="74" font-family="Liberation Sans,sans-serif" font-size="11.500" fill="#d6d6d6" textLength="56" lengthAdjust="spacingAndGlyphs">Perspective</text>
<path d="M28 582.500 V558" stroke="#2020d0" stroke-width="1"/><path d="M28 582.500 H12" stroke="#d02020" stroke-width="1"/><path d="M28 582.500 H44" stroke="#20a020" stroke-width="1"/>
<text x="29.500" y="553" font-family="Liberation Sans,sans-serif" font-size="10" fill="#2020d0">z</text><text x="12" y="578" font-family="Liberation Sans,sans-serif" font-size="10" fill="#d02020">x</text><text x="46" y="578" font-family="Liberation Sans,sans-serif" font-size="10" fill="#20a020">y</text>
</svg>
</div>
<div class="a" style="left:620px;top:64px;width:28px;height:24px;background:#c8c8c8;border:1px solid;border-color:#f0f0f0 #8a8a8a transparent #f0f0f0;border-radius:3px 3px 0 0;"></div>
<div class="a" style="left:651px;top:62px;width:26px;height:27px;background:#d2d2d2;border:1px solid;border-color:#f6f6f6 #7a7a7a transparent #f6f6f6;border-radius:3px 3px 0 0;"></div>
<div class="a" style="left:678px;top:64px;width:28px;height:24px;background:#c8c8c8;border:1px solid;border-color:#f0f0f0 #8a8a8a transparent #f0f0f0;border-radius:3px 3px 0 0;"></div>
<div class="a" style="left:707px;top:64px;width:27px;height:24px;background:#c8c8c8;border:1px solid;border-color:#f0f0f0 #8a8a8a transparent #f0f0f0;border-radius:3px 3px 0 0;"></div>
<div class="a" style="left:735px;top:64px;width:27px;height:24px;background:#c8c8c8;border:1px solid;border-color:#f0f0f0 #8a8a8a transparent #f0f0f0;border-radius:3px 3px 0 0;"></div>
<div class="a" style="left:763px;top:64px;width:27px;height:24px;background:#c8c8c8;border:1px solid;border-color:#f0f0f0 #8a8a8a transparent #f0f0f0;border-radius:3px 3px 0 0;"></div>
<div class="a" style="left:619px;top:88px;width:32px;height:1px;background:#f4f4f4;"></div>
<div class="a" style="left:677px;top:88px;width:120px;height:1px;background:#f4f4f4;"></div>
<div class="fld" style="left:626px;top:94px;width:146px;height:19px;border-width:2px 1px 1px 2px;border-color:#181818 #f8f8f8 #f8f8f8 #181818;"><span class="t" style="left:2px;top:2px;font-size:12px;">1_0128_Lampara</span></div>
<div class="a" style="left:776px;top:94px;width:16px;height:19px;background:#5858e0;border:1px solid;border-color:#f0f0f0 #707070 #707070 #f0f0f0;"></div>
<div class="fld" style="left:626px;top:119px;width:167px;height:23px;border-width:2px 1px 1px 2px;border-color:#606060 #f8f8f8 #f8f8f8 #606060;"><span class="t" style="left:3px;top:4px;font-size:12px;">Modifier List</span><div class="btn" style="right:1px;top:1px;width:16px;height:17px;background:#e8e8e8;"><div class="a" style="left:3px;top:6px;width:0;height:0;border:4px solid transparent;border-top:4px solid #000;border-bottom:0;"></div></div></div>
<div class="fld" style="left:626px;top:146px;width:166px;height:117px;border-color:#808080 #f8f8f8 #f8f8f8 #808080;"><div class="a" style="left:1px;top:1px;width:162px;height:17px;background:#808080;"></div><div class="a" style="left:7px;top:5px;width:9px;height:9px;background:#000;"><div class="a" style="left:2px;top:4px;width:5px;height:1px;background:#fff"></div><div class="a" style="left:4px;top:2px;width:1px;height:5px;background:#fff"></div></div><span class="t" style="left:23px;top:3px;font-size:12px;">Editable Poly</span></div>
<div class="vs" style="left:659px;top:269px;height:17px;"></div>
<div class="vs" style="left:695px;top:269px;height:17px;"></div>
<div class="vs" style="left:755px;top:269px;height:17px;"></div>
<div class="a" style="left:623px;top:300px;width:174px;height:2px;background:#000;"></div>
<div class="a" style="left:621px;top:310px;width:1px;height:338px;background:#808080;"></div>
<div class="a" style="left:622px;top:310px;width:1px;height:338px;background:#e4e4e4;"></div>
<div class="a" style="left:624px;top:310px;width:1px;height:338px;background:#808080;"></div>
<div class="a" style="left:625px;top:310px;width:1px;height:338px;background:#ececec;"></div>
<div class="a" style="left:788px;top:310px;width:1px;height:338px;background:#808080;"></div>
<div class="a" style="left:789px;top:310px;width:1px;height:338px;background:#ececec;"></div>
<div class="a" style="left:791px;top:310px;width:4px;height:92px;background:#000;"></div>
<div class="a" style="left:791px;top:402px;width:4px;height:97px;background:#707070;"></div>
<div class="a" style="left:791px;top:499px;width:4px;height:148px;background:#000;"></div>
<div class="a" style="left:792px;top:445px;width:2px;height:1px;background:#e0e0e0;"></div>
<div class="a" style="left:792px;top:447px;width:2px;height:1px;background:#e0e0e0;"></div>
<div class="a" style="left:792px;top:449px;width:2px;height:1px;background:#e0e0e0;"></div>
<div class="a" style="left:792px;top:451px;width:2px;height:1px;background:#e0e0e0;"></div>
<div class="a" style="left:792px;top:453px;width:2px;height:1px;background:#e0e0e0;"></div>
<div class="a" style="left:626px;top:310px;width:162px;height:337px;overflow:hidden;">
</div>
<div class="grp" style="left:631px;top:300px;width:151px;height:49px;clip-path:inset(10px -2px -2px -2px);"></div>
<div class="a" style="left:640.5px;top:313.5px;width:11px;height:11px;border-radius:50%;background:#e8e8e8;border:1px solid;border-color:#606060 #f8f8f8 #f8f8f8 #606060;"></div>
<div class="a" style="left:644px;top:317px;width:4px;height:4px;border-radius:50%;background:#000;"></div>
<span class="t" style="left:659px;top:313px;font-size:12px;">None</span>
<div class="a" style="left:700.5px;top:313.5px;width:11px;height:11px;border-radius:50%;background:#e8e8e8;border:1px solid;border-color:#606060 #f8f8f8 #f8f8f8 #606060;"></div>
<span class="t" style="left:719px;top:313px;font-size:12px;">Edge</span>
<div class="a" style="left:640.5px;top:331.5px;width:11px;height:11px;border-radius:50%;background:#e8e8e8;border:1px solid;border-color:#606060 #f8f8f8 #f8f8f8 #606060;"></div>
<span class="t" style="left:659px;top:331px;font-size:12px;">Face</span>
<div class="a" style="left:700.5px;top:331.5px;width:11px;height:11px;border-radius:50%;background:#e8e8e8;border:1px solid;border-color:#606060 #f8f8f8 #f8f8f8 #606060;"></div>
<span class="t" style="left:719px;top:331px;font-size:12px;">Normal</span>
<div class="a" style="left:643px;top:360px;width:12px;height:12px;background:#e4e4e4;border:1px solid;border-width:2px 1px 1px 2px;border-color:#606060 #f8f8f8 #f8f8f8 #606060;"></div>
<span class="t" style="left:661px;top:360px;font-size:12px;">Preserve UVs</span>
<div class="btn" style="left:735px;top:358px;width:14px;height:17px;"><div class="a" style="left:1px;top:3px;width:9px;height:9px;border:1px solid #000;border-top:3px solid #000;background:#d8d8d8;"></div></div>
<div class="btn" style="left:632px;top:380px;width:72px;height:17px;line-height:14px;font-size:12px;"><span class="sx">Create</span></div>
<div class="btn dis" style="left:710px;top:380px;width:71px;height:17px;line-height:14px;font-size:12px;"><span class="sx">Collapse</span></div>
<div class="btn" style="left:632px;top:403px;width:57px;height:17px;line-height:14px;font-size:12px;"><span class="sx">Attach</span></div>
<div class="btn" style="left:690px;top:403px;width:14px;height:17px;"><div class="a" style="left:1px;top:3px;width:9px;height:9px;border:1px solid #000;border-top:3px solid #000;background:#d8d8d8;"></div></div>
<div class="btn dis" style="left:710px;top:403px;width:71px;height:17px;line-height:14px;font-size:12px;"><span class="sx">Detach</span></div>
<div class="grp" style="left:631px;top:425px;width:151px;height:72px;"></div>
<div class="btn dis" style="left:636px;top:431px;width:68px;height:17px;line-height:14px;font-size:12px;"><span class="sx">Slice Plane</span></div>
<div class="a" style="left:709px;top:432px;width:12px;height:12px;background:#e4e4e4;border:1px solid;border-width:2px 1px 1px 2px;border-color:#606060 #f8f8f8 #f8f8f8 #606060;"></div>
<span class="t" style="left:728px;top:432px;font-size:12px;">Split</span>
<div class="btn dis" style="left:636px;top:453px;width:68px;height:17px;line-height:14px;font-size:12px;"><span class="sx">Slice</span></div>
<div class="btn dis" style="left:710px;top:453px;width:68px;height:17px;line-height:14px;font-size:12px;"><span class="sx">Reset Plane</span></div>
<div class="btn" style="left:636px;top:476px;width:68px;height:17px;line-height:14px;font-size:12px;"><span class="sx">QuickSlice</span></div>
<div class="btn" style="left:710px;top:476px;width:68px;height:17px;line-height:14px;font-size:12px;"><span class="sx">Cut</span></div>
<div class="btn" style="left:632px;top:504px;width:57px;height:17px;line-height:14px;font-size:12px;"><span class="sx">MSmooth</span></div>
<div class="btn" style="left:690px;top:504px;width:14px;height:17px;"><div class="a" style="left:1px;top:3px;width:9px;height:9px;border:1px solid #000;border-top:3px solid #000;background:#d8d8d8;"></div></div>
<div class="btn" style="left:710px;top:504px;width:56px;height:17px;line-height:14px;font-size:12px;"><span class="sx">Tessellate</span></div>
<div class="btn" style="left:767px;top:504px;width:14px;height:17px;"><div class="a" style="left:1px;top:3px;width:9px;height:9px;border:1px solid #000;border-top:3px solid #000;background:#d8d8d8;"></div></div>
<div class="btn" style="left:632px;top:527px;width:86px;height:17px;line-height:14px;font-size:12px;"><span class="sx">Make Planar</span></div>
<div class="btn" style="left:723px;top:527px;width:15px;height:17px;line-height:14px;font-size:12px;"><span class="sx">X</span></div>
<div class="btn" style="left:744px;top:527px;width:15px;height:17px;line-height:14px;font-size:12px;"><span class="sx">Y</span></div>
<div class="btn" style="left:765px;top:527px;width:16px;height:17px;line-height:14px;font-size:12px;"><span class="sx">Z</span></div>
<div class="btn" style="left:632px;top:549px;width:72px;height:17px;line-height:14px;font-size:12px;"><span class="sx">View Align</span></div>
<div class="btn" style="left:710px;top:549px;width:71px;height:17px;line-height:14px;font-size:12px;"><span class="sx">Grid Align</span></div>
<div class="btn" style="left:671px;top:572px;width:55px;height:17px;line-height:14px;font-size:12px;"><span class="sx">Relax</span></div>
<div class="btn" style="left:727px;top:572px;width:15px;height:17px;"><div class="a" style="left:2px;top:3px;width:9px;height:9px;border:1px solid #000;border-top:3px solid #000;background:#d8d8d8;"></div></div>
<div class="btn dis" style="left:632px;top:595px;width:72px;height:17px;line-height:14px;font-size:12px;"><span class="sx">Hide Selected</span></div>
<div class="btn dis" style="left:710px;top:595px;width:71px;height:17px;line-height:14px;font-size:12px;"><span class="sx">Unhide All</span></div>
<div class="btn dis" style="left:662px;top:618px;width:91px;height:17px;line-height:14px;font-size:12px;"><span class="sx">Hide Unselected</span></div>
<div class="a" style="left:627px;top:638px;width:160px;height:9px;overflow:hidden;"><span class="t" style="left:9px;top:2px;font-size:12px;color:#8c8c8c;text-shadow:1px 1px 0 #f0f0f0;">Named Selections:</span></div>
<div class="a" style="left:623px;top:647px;width:174px;height:1px;background:#ececec;"></div>
<svg class="a" style="left:618px;top:60px;" width="184" height="230" viewBox="618 60 184 230"><defs><radialGradient id="star"><stop offset="0" stop-color="#ffffff"/><stop offset="0.35" stop-color="#fff8c0"/><stop offset="1" stop-color="#fff8c0" stop-opacity="0"/></radialGradient><linearGradient id="tube" x1="0" y1="0" x2="1" y2="1"><stop offset="0" stop-color="#303860"/><stop offset="0.45" stop-color="#c0c8e8"/><stop offset="1" stop-color="#283058"/></linearGradient></defs><circle cx="631" cy="70.500" r="6.500" fill="url(#star)"/><path d="M631 64 V77 M624.500 70.500 H637.500 M626.500 66 L635.500 75 M635.500 66 L626.500 75" stroke="#fffbe0" stroke-width="0.800" opacity="0.9"/><path d="M632.500 72 L644 79 L640 80 L643 84.500 L641.200 85.500 L638.500 81 L636 84 Z" fill="#f8f8f8" stroke="#404040" stroke-width="0.900"/><path d="M655.500 68 V83.500 H672.500" fill="none" stroke="#505050" stroke-width="0.700" stroke-dasharray="1 1.500"/><circle cx="655.500" cy="68" r="0.900" fill="#000"/><circle cx="672.500" cy="83.500" r="0.900" fill="#000"/><path d="M656.500 83 Q657 69 671.500 68.500" fill="none" stroke="#283058" stroke-width="5.500"/><path d="M657 83 Q657.500 70 671.500 69" fill="none" stroke="#8090c8" stroke-width="3"/><path d="M656.500 83 Q657 69 671.500 68" fill="none" stroke="#d8e0f8" stroke-width="1"/><path d="M692.300 72 V80 M692.300 74 L684.500 80 M692.300 74 L700 80" stroke="#505078" stroke-width="1.200" fill="none"/><rect x="688.500" y="65.500" width="7.500" height="7" fill="#e0e0f0" stroke="#505078" stroke-width="1.200"/><rect x="682.5" y="80" width="4.200" height="4" fill="#f0f0f8" stroke="#505078" stroke-width="1.200"/><rect x="690.2" y="80" width="4.200" height="4" fill="#f0f0f8" stroke="#505078" stroke-width="1.200"/><rect x="698" y="80" width="4.200" height="4" fill="#f0f0f8" stroke="#505078" stroke-width="1.200"/><circle cx="723.500" cy="75" r="7" fill="#d8d8d8" stroke="#101010" stroke-width="1.800"/><circle cx="723.500" cy="75" r="4.500" fill="none" stroke="#808080" stroke-width="0.800"/><path d="M723.500 69 V81 M717.500 75 H729.500 M719.300 70.800 L727.700 79.200 M727.700 70.800 L719.300 79.200" stroke="#909090" stroke-width="0.700"/><circle cx="723.500" cy="75" r="1.600" fill="#f02020"/><path d="M715 69 Q711.500 75 715 81 M712.800 70 Q710 75 712.800 80" fill="none" stroke="#505050" stroke-width="1"/><rect x="741.300" y="66.800" width="18" height="14.500" rx="1" fill="#fff" stroke="#101010" stroke-width="1.800"/><rect x="746" y="83" width="9" height="2" fill="#606060"/><rect x="749" y="81.500" width="3" height="2" fill="#404040"/><rect x="745" y="70" width="3" height="8" rx="1.200" fill="#4060d0" stroke="#203080" stroke-width="0.500"/><path d="M748.500 79 L752 69.500 L755.500 79 Z" fill="#e81818"/><path d="M771.500 69 Q772 66 777 66.500 L783 66.500 Q786 67 786.500 70.500 L785 70.500 Q784 68.800 781 69 L781 70.500 L776.500 70.500 L776.500 69 Q774 68.500 773.500 70.500 Z" fill="#a0a0a0" stroke="#202020" stroke-width="0.800"/><path d="M777.500 70.500 L780.300 70.500 L780 80 L780.800 85 L776.800 85 L777.800 80 Z" fill="#a02820" stroke="#301010" stroke-width="0.700"/><path d="M777 80 L780.800 80 L780.800 85 L776.800 85 Z" fill="#202020"/><path d="M633 277 H641" stroke="#000" stroke-width="1.300"/><path d="M641 272.500 V281.500 M641 274.500 H646 M641 279.500 H646 M646.500 272.500 V281.500" stroke="#000" stroke-width="1.600" fill="none"/><rect x="641.500" y="275" width="4.500" height="4" fill="#505050"/><rect x="673.500" y="272" width="7" height="11.500" fill="#fff" stroke="#000" stroke-width="1.300"/><path d="M673.500 272 l7 4 M680.500 272 l-7 4 M677 272 v4" stroke="#000" stroke-width="0.900"/><rect x="673.500" y="272" width="7" height="3.500" fill="#404040" opacity="0.6"/><path d="M707 273 L713.500 281 L721 273" fill="none" stroke="#f4f4f4" stroke-width="1"/><path d="M706 272 L713 281 L720.500 272" fill="none" stroke="#8c8c8c" stroke-width="1.100" stroke-dasharray="2 0.800"/><circle cx="713" cy="280" r="1.800" fill="#c5c5c5" stroke="#8c8c8c" stroke-width="0.900"/><path d="M733.500 277 Q733.500 273.500 737.500 273.500 Q741.500 273.500 741.500 277 V281 Q741.500 284 737.500 284 Q733.500 284 733.500 281 Z M733.500 277.500 H741.500 M735 273 Q736 271 738.500 271.800" fill="none" stroke="#f4f4f4" stroke-width="1" transform="translate(0.800 0.800)"/><path d="M733.500 277 Q733.500 273.500 737.500 273.500 Q741.500 273.500 741.500 277 V281 Q741.500 284 737.500 284 Q733.500 284 733.500 281 Z M733.500 277.500 H741.500 M735 273 Q736 271 738.500 271.800" fill="none" stroke="#8c8c8c" stroke-width="1"/><rect x="766.200" y="272" width="12.500" height="12" fill="#f4f4f4" stroke="#1818a0" stroke-width="1.300"/><rect x="766" y="271.500" width="13" height="3.200" fill="#1818a0"/><path d="M769.500 277.500 h4 v4 h-4 z M775.500 276 h4.500 v3.500 h-4.500 z M775.500 281 h4.500 v3.500 h-4.500 z" fill="#d0d0d0" stroke="#303030" stroke-width="0.900" stroke-dasharray="1 0.800"/></svg>
<div class="a" style="left:1px;top:609px;width:617px;height:18px;background:#c5c5c5;"></div><div class="a" style="left:159px;top:610px;width:458px;height:17px;background:#bfbfbf;"></div>
<div class="btn" style="left:2px;top:610px;width:15px;height:16px;line-height:13px;font-size:12px;"><span class="sx">&lt;</span></div>
<div class="btn" style="left:18px;top:610px;width:124px;height:16px;line-height:13px;font-size:12px;border-color:#f4f4f4 #101010 #101010 #f4f4f4;border-width:1px 2px 2px 1px;line-height:12px;"><span class="sx">0 / 100</span></div>
<div class="btn" style="left:143px;top:610px;width:15px;height:16px;line-height:13px;font-size:12px;"><span class="sx">&gt;</span></div>
<div class="a" style="left:0px;top:627px;width:617px;height:1px;background:#f0f0f0;"></div>
<div class="a" style="left:0px;top:628px;width:617px;height:1px;background:#8a8a8a;"></div>
<svg class="a" style="left:0;top:629px;" width="620" height="27" viewBox="0 0 620 27" shape-rendering="crispEdges"><rect x="51" y="0" width="8" height="25" fill="#9cb4d2"/><rect x="51" y="0" width="1" height="25" fill="#5878a8"/><rect x="58" y="0" width="1" height="25" fill="#5878a8"/><rect x="54" y="0" width="1" height="24" fill="#606060"/><rect x="64" y="0" width="1" height="11" fill="#707070"/><rect x="74" y="0" width="1" height="11" fill="#707070"/><rect x="85" y="0" width="1" height="11" fill="#707070"/><rect x="95" y="0" width="1" height="11" fill="#707070"/><rect x="105" y="0" width="1" height="24" fill="#606060"/><rect x="115" y="0" width="1" height="11" fill="#707070"/><rect x="125" y="0" width="1" height="11" fill="#707070"/><rect x="136" y="0" width="1" height="11" fill="#707070"/><rect x="146" y="0" width="1" height="11" fill="#707070"/><rect x="156" y="0" width="1" height="24" fill="#606060"/><rect x="166" y="0" width="1" height="11" fill="#707070"/><rect x="176" y="0" width="1" height="11" fill="#707070"/><rect x="187" y="0" width="1" height="11" fill="#707070"/><rect x="197" y="0" width="1" height="11" fill="#707070"/><rect x="207" y="0" width="1" height="24" fill="#606060"/><rect x="217" y="0" width="1" height="11" fill="#707070"/><rect x="227" y="0" width="1" height="11" fill="#707070"/><rect x="238" y="0" width="1" height="11" fill="#707070"/><rect x="248" y="0" width="1" height="11" fill="#707070"/><rect x="258" y="0" width="1" height="24" fill="#606060"/><rect x="268" y="0" width="1" height="11" fill="#707070"/><rect x="278" y="0" width="1" height="11" fill="#707070"/><rect x="289" y="0" width="1" height="11" fill="#707070"/><rect x="299" y="0" width="1" height="11" fill="#707070"/><rect x="309" y="0" width="1" height="24" fill="#606060"/><rect x="319" y="0" width="1" height="11" fill="#707070"/><rect x="329" y="0" width="1" height="11" fill="#707070"/><rect x="340" y="0" width="1" height="11" fill="#707070"/><rect x="350" y="0" width="1" height="11" fill="#707070"/><rect x="360" y="0" width="1" height="24" fill="#606060"/><rect x="370" y="0" width="1" height="11" fill="#707070"/><rect x="380" y="0" width="1" height="11" fill="#707070"/><rect x="391" y="0" width="1" height="11" fill="#707070"/><rect x="401" y="0" width="1" height="11" fill="#707070"/><rect x="411" y="0" width="1" height="24" fill="#606060"/><rect x="421" y="0" width="1" height="11" fill="#707070"/><rect x="431" y="0" width="1" height="11" fill="#707070"/><rect x="442" y="0" width="1" height="11" fill="#707070"/><rect x="452" y="0" width="1" height="11" fill="#707070"/><rect x="462" y="0" width="1" height="24" fill="#606060"/><rect x="472" y="0" width="1" height="11" fill="#707070"/><rect x="482" y="0" width="1" height="11" fill="#707070"/><rect x="493" y="0" width="1" height="11" fill="#707070"/><rect x="503" y="0" width="1" height="11" fill="#707070"/><rect x="513" y="0" width="1" height="24" fill="#606060"/><rect x="523" y="0" width="1" height="11" fill="#707070"/><rect x="533" y="0" width="1" height="11" fill="#707070"/><rect x="544" y="0" width="1" height="11" fill="#707070"/><rect x="554" y="0" width="1" height="11" fill="#707070"/><rect x="564" y="0" width="1" height="24" fill="#606060"/></svg>
<span class="t" style="left:52px;top:641px;font-size:12px;color:#2a4a8a;">0</span>
<span class="t" style="right:696.3px;top:641px;font-size:12px;transform-origin:100% 0;">1</span>
<span class="t" style="left:105.8px;top:641px;font-size:12px;">0</span>
<span class="t" style="right:645.3px;top:641px;font-size:12px;transform-origin:100% 0;">2</span>
<span class="t" style="left:156.8px;top:641px;font-size:12px;">0</span>
<span class="t" style="right:594.3px;top:641px;font-size:12px;transform-origin:100% 0;">3</span>
<span class="t" style="left:207.8px;top:641px;font-size:12px;">0</span>
<span class="t" style="right:543.3px;top:641px;font-size:12px;transform-origin:100% 0;">4</span>
<span class="t" style="left:258.8px;top:641px;font-size:12px;">0</span>
<span class="t" style="right:492.3px;top:641px;font-size:12px;transform-origin:100% 0;">5</span>
<span class="t" style="left:309.8px;top:641px;font-size:12px;">0</span>
<span class="t" style="right:441.3px;top:641px;font-size:12px;transform-origin:100% 0;">6</span>
<span class="t" style="left:360.8px;top:641px;font-size:12px;">0</span>
<span class="t" style="right:390.3px;top:641px;font-size:12px;transform-origin:100% 0;">7</span>
<span class="t" style="left:411.8px;top:641px;font-size:12px;">0</span>
<span class="t" style="right:339.3px;top:641px;font-size:12px;transform-origin:100% 0;">8</span>
<span class="t" style="left:462.8px;top:641px;font-size:12px;">0</span>
<span class="t" style="right:288.3px;top:641px;font-size:12px;transform-origin:100% 0;">9</span>
<span class="t" style="left:513.8px;top:641px;font-size:12px;">0</span>
<span class="t" style="right:237.3px;top:641px;font-size:12px;transform-origin:100% 0;">10</span>
<span class="t" style="left:564.8px;top:641px;font-size:12px;">0</span>
<svg class="a" style="left:13px;top:632px;" width="20" height="18" viewBox="0 0 20 18" shape-rendering="crispEdges"><rect x="1.5" y="1.5" width="16" height="5" fill="#e8e8e8" stroke="#000"/><path d="M3 4 q2 -2 4 0 t4 0 t4 0" fill="none" stroke="#000" shape-rendering="auto"/><path d="M5 14 v-5 M3 11 l2 -2 l2 2 M13 9 v5 M11 12 l2 2 l2 -2" fill="none" stroke="#000"/><rect x="1.5" y="14.5" width="16" height="2" fill="#e8e8e8" stroke="#000"/></svg>
<div class="fld" style="left:3px;top:657px;width:35px;height:21px;background:#dcc4c4;border-color:#808080 #f8f8f8 #f8f8f8 #808080;"></div>
<div class="fld" style="left:3px;top:680px;width:35px;height:22px;background:#fff;border-color:#808080 #f8f8f8 #f8f8f8 #808080;overflow:hidden;"><span class="t" style="left:13px;top:4px;font-family:'Liberation Serif',serif;font-size:13px;transform:none;">Ed</span></div>
<div class="vs" style="left:41px;top:656px;height:47px;"></div>
<div class="vs" style="left:44px;top:656px;height:47px;"></div>
<div class="fld" style="left:47px;top:658px;width:49px;height:21px;background:#c8c8c8;border-color:#808080 #f4f4f4 #f4f4f4 #808080;"><span class="t" style="left:5px;top:4px;font-size:12px;">1 Object</span></div>
<svg class="a" style="left:103px;top:661px;" width="13" height="13" viewBox="0 0 13 13"><path d="M3.5 6 v-2.5 a3 3 0 0 1 6 0 v2.5" fill="none" stroke="#000" stroke-width="1.4"/><rect x="1.5" y="5.5" width="10" height="7" fill="#000"/><rect x="2.5" y="7" width="8" height="1" fill="#c5c5c5"/><rect x="2.5" y="9" width="8" height="1" fill="#c5c5c5"/><rect x="2.5" y="11" width="8" height="1" fill="#c5c5c5"/></svg>
<svg class="a" style="left:129px;top:660px;" width="16" height="16" viewBox="0 0 16 16"><rect x="0.5" y="0.5" width="15" height="15" fill="#d4d4d4" stroke="#000"/><path d="M8 1 v14 M1 8 h14" stroke="#000" stroke-width="1" shape-rendering="crispEdges"/><circle cx="8" cy="8" r="2.6" fill="#000"/></svg>
<span class="t" style="left:152px;top:662px;font-size:12px;">X:</span>
<div class="fld" style="left:163px;top:658px;width:56px;height:21px;border-width:2px 1px 1px 2px;"></div>
<span class="t" style="left:234px;top:662px;font-size:12px;">Y:</span>
<div class="fld" style="left:244px;top:658px;width:57px;height:21px;border-width:2px 1px 1px 2px;"></div>
<span class="t" style="left:316px;top:662px;font-size:12px;">Z:</span>
<div class="fld" style="left:327px;top:658px;width:35px;height:21px;border-width:2px 1px 1px 2px;"></div>
<div class="fld" style="left:47px;top:683px;width:315px;height:21px;background:#c8c8c8;border-color:#808080 #f4f4f4 #f4f4f4 #808080;"><span class="t" style="left:5px;top:4px;font-size:12px;">Click or click-and-drag to select objects</span></div>
<div class="btn" style="left:360px;top:657px;width:43px;height:45px;background:#c5c5c5;border-color:#f4f4f4 #808080 #808080 #f4f4f4;"><svg class="a" style="left:8px;top:14px;" width="27" height="14" viewBox="0 0 27 14"><circle cx="5" cy="7" r="3.8" fill="none" stroke="#000" stroke-width="1.8"/><path d="M9 7 H25 M19 7 v4 M23.5 7 v4" stroke="#000" stroke-width="2" fill="none"/></svg></div>
<div class="btn" style="left:407px;top:658px;width:46px;height:21px;line-height:18px;font-size:12px;text-indent:-1px;"><span class="sx">Auto Key</span></div>
<div class="btn" style="left:407px;top:680px;width:46px;height:21px;line-height:18px;font-size:12px;"><span class="sx">Set Key</span></div>
<div class="fld" style="left:458px;top:658px;width:114px;height:20px;border-width:2px 1px 1px 2px;border-color:#606060 #f8f8f8 #f8f8f8 #606060;"><span class="t" style="left:3px;top:3px;font-size:12px;">Selected</span><div class="btn" style="right:0px;top:0px;width:17px;height:17px;background:#e8e8e8;"><div class="a" style="left:4px;top:6px;width:0;height:0;border:4px solid transparent;border-top:4px solid #000;border-bottom:0;"></div></div></div>
<svg class="a" style="left:458px;top:681px;" width="22" height="21" viewBox="458 681 22 21"><path d="M468.300 684.500 H476 M460.400 697.300 H470" stroke="#5050c8" stroke-width="1.200"/><path d="M461.300 691 L464.800 696.800 L470 685 L474.400 685 L475.500 692.500" fill="none" stroke="#d02020" stroke-width="1.500"/><path d="M479 697 v3.500 h-3.500 z" fill="#fff"/></svg>
<div class="btn" style="left:484px;top:681px;width:88px;height:19px;line-height:16px;font-size:12px;"><span class="sx">Key Filters...</span></div>
<div class="vs" style="left:76px;top:33px;height:16px;"></div>
<div class="vs" style="left:178px;top:33px;height:16px;"></div>
<div class="vs" style="left:382px;top:33px;height:16px;"></div>
<div class="vs" style="left:586px;top:33px;height:16px;"></div>
<div class="vs" style="left:656px;top:33px;height:16px;"></div>
<div class="vs" style="left:790px;top:33px;height:16px;"></div>
<div class="a" style="left:252px;top:25px;width:30px;height:30px;background:#eecc52;border:1px solid;border-color:#d8d8e0 #f4f4f4 #f4f4f4 #d8d8e0;"></div>
<div class="a" style="left:621px;top:25px;width:31px;height:30px;background:#eecc52;border:1px solid;border-color:#d8d8e0 #f4f4f4 #f4f4f4 #d8d8e0;"></div>
<div class="fld" style="left:181px;top:26px;width:66px;height:20px;border-width:2px 1px 1px 2px;border-color:#606060 #f8f8f8 #f8f8f8 #606060;"><span class="t" style="left:3px;top:3px;font-size:12px;">All</span><div class="btn" style="right:0px;top:0px;width:15px;height:17px;background:#e8e8e8;"><div class="a" style="left:3px;top:6px;width:0;height:0;border:4px solid transparent;border-top:4px solid #000;border-bottom:0;"></div></div></div>
<div class="fld" style="left:481px;top:26px;width:69px;height:20px;border-width:2px 1px 1px 2px;border-color:#606060 #f8f8f8 #f8f8f8 #606060;"><span class="t" style="left:3px;top:3px;font-size:12px;">View</span><div class="btn" style="right:0px;top:0px;width:15px;height:17px;background:#e8e8e8;"><div class="a" style="left:3px;top:6px;width:0;height:0;border:4px solid transparent;border-top:4px solid #000;border-bottom:0;"></div></div></div>
<svg class="a" style="left:0;top:22px;" width="802" height="38" viewBox="0 22 802 38"><defs>
<linearGradient id="gDk" x1="0" y1="0" x2="0" y2="1"><stop offset="0" stop-color="#303030"/><stop offset="1" stop-color="#a0a0a0"/></linearGradient>
<linearGradient id="gLt" x1="0" y1="0" x2="1" y2="0"><stop offset="0" stop-color="#ffffff"/><stop offset="1" stop-color="#707070"/></linearGradient>
<linearGradient id="gSq" x1="0" y1="0" x2="1" y2="1"><stop offset="0" stop-color="#ffffff"/><stop offset="1" stop-color="#c0c0d8"/></linearGradient>
<linearGradient id="gMag" x1="0" y1="0" x2="1" y2="1"><stop offset="0" stop-color="#d03828"/><stop offset="1" stop-color="#f09080"/></linearGradient>
<linearGradient id="gU" x1="0" y1="0" x2="1" y2="0"><stop offset="0" stop-color="#b8b8b8"/><stop offset="0.5" stop-color="#787878"/><stop offset="1" stop-color="#282828"/></linearGradient>
<linearGradient id="gR" x1="1" y1="0" x2="0" y2="0"><stop offset="0" stop-color="#b8b8b8"/><stop offset="0.5" stop-color="#787878"/><stop offset="1" stop-color="#282828"/></linearGradient>
<linearGradient id="gAh" x1="0" y1="0" x2="1" y2="0"><stop offset="0" stop-color="#606060"/><stop offset="0.5" stop-color="#ffffff"/><stop offset="1" stop-color="#606060"/></linearGradient>
<g id="sq"><rect x="0.5" y="0.5" width="8" height="8.5" fill="url(#gSq)" stroke="#505078" stroke-width="1.2"/></g>
<g id="mag"><path d="M4 15 L1.2 8 A5.2 5.2 0 0 1 11 4.200 L14.500 10.500" fill="none" stroke="url(#gMag)" stroke-width="3.600"/><path d="M4 15 L1.2 8 A5.2 5.2 0 0 1 11 4.200 L14.500 10.500" fill="none" stroke="#ec6a58" stroke-width="2"/><path d="M3.400 13.600 l0.700 1.800" stroke="#fff" stroke-width="3.600"/><path d="M13.700 9.200 l0.900 1.600" stroke="#fff" stroke-width="3.600"/></g>
<g id="fly"><path d="M3.500 0 v3.500 h-3.500 z" fill="#000"/></g>
<g id="cur"><path d="M0 0 L0 16 L3.800 12.600 L6.500 19 L9.200 17.800 L6.500 11.800 L11.500 11.500 Z" fill="url(#gLt)" stroke="#303030" stroke-width="1"/></g>
</defs><path d="M16.500 40 A10 10 0 0 1 36 37.500 L31.500 38 A5.500 5.500 0 0 0 21.500 40 Z" fill="url(#gU)" stroke="#505050" stroke-width="0.500"/><path d="M14 37.500 L19.300 39.500 L25 37.500 L19.300 48.500 Z" fill="url(#gAh)" stroke="#383838" stroke-width="1"/><path d="M65.500 40 A10 10 0 0 0 46 37.500 L50.500 38 A5.500 5.500 0 0 1 60.500 40 Z" fill="url(#gR)" stroke="#505050" stroke-width="0.500"/><path d="M57 37.500 L62.700 39.500 L68 37.500 L62.700 48.500 Z" fill="url(#gAh)" stroke="#383838" stroke-width="1"/><use href="#sq" x="84" y="28.500"/><use href="#sq" x="97" y="42.500"/><ellipse cx="92.500" cy="37" rx="2.200" ry="1.500" transform="rotate(45 92.500 37)" fill="none" stroke="#c01020" stroke-width="1.200"/><ellipse cx="95" cy="39.800" rx="2.200" ry="1.500" transform="rotate(45 95 39.800)" fill="none" stroke="#c01020" stroke-width="1.200"/><ellipse cx="97.500" cy="42.500" rx="2.200" ry="1.500" transform="rotate(45 97.500 42.500)" fill="none" stroke="#c01020" stroke-width="1.200"/><use href="#sq" x="116.500" y="28.500"/><use href="#sq" x="129.500" y="42.500"/><path d="M122.500 37.500 q1.500 -3 4 -1.500" fill="none" stroke="#b01020" stroke-width="1.600"/><path d="M130 34 h1 M132 32 h1 M134 35 h1 M131 37 h1 M133 38 h1 M120 43 h1 M122 45 h1 M121 47 h1 M124 42 h1 M124 46 h1" stroke="#c04050" stroke-width="1"/><path d="M150 34 q4 3 8 0 M149.500 41 q4 -4 8.500 -1 M153 49 q-0.500 -5 3 -6 q4 -1 5 -2.500 M159 37 q3 -1 3.500 -4 q1 -4 5 -4.500 M163 43 q2 -2 2 -5 q1 -3 3 -3" fill="none" stroke="#202070" stroke-width="1.300"/><path d="M150 36 q-1.500 -7 4 -7.500 q6 -0.500 6 7 q1 6 2.500 7.500" fill="none" stroke="#d02020" stroke-width="1.300"/><use href="#sq" x="161.500" y="42.500"/><use href="#cur" x="263.500" y="30.500"/><rect x="289" y="29.5" width="17" height="1.900" fill="#000"/><rect x="289" y="32.9" width="13" height="1.900" fill="#000"/><rect x="289" y="36.3" width="8" height="1.900" fill="#000"/><rect x="289" y="39.7" width="8" height="1.900" fill="#000"/><rect x="289" y="43.1" width="8" height="1.900" fill="#000"/><rect x="289" y="46.5" width="8" height="1.900" fill="#000"/><rect x="289" y="49.9" width="10" height="1.900" fill="#000"/><g transform="translate(301.500 35.500) scale(0.72)"><use href="#cur"/></g><rect x="321" y="30.500" width="20" height="19" fill="none" stroke="#000" stroke-width="2" stroke-dasharray="2 1.600"/><rect x="324" y="33" width="14.500" height="14.500" fill="url(#gSq)" stroke="#707070" stroke-width="1"/><use href="#fly" x="341.500" y="50.500"/><path d="M366 30.500 H353 V49.500 H366" fill="none" stroke="#000" stroke-width="2" stroke-dasharray="2 1.600"/><path d="M366 33.500 H356 V47 H366 Z" fill="url(#gSq)" stroke="#707070"/><circle cx="369" cy="39.500" r="5.300" fill="#101010"/><circle cx="369" cy="39.500" r="1.400" fill="#fff"/><path d="M401 29.500 l4 5 h-3 v4.500 h4.500 v-3 l5.500 4 l-5.500 4 v-3 h-4.500 v4.500 h3 l-4 5 l-4 -5 h3 v-4.500 h-4.500 v3 l-5.500 -4 l5.500 -4 v3 h4.500 v-4.500 h-3 z" fill="#6e6e6e" stroke="#585858" stroke-width="0.600"/><path d="M429.500 31.800 A9 9 0 1 0 439.500 33" fill="none" stroke="url(#gDk)" stroke-width="3.800"/><path d="M424 31 L432 29.500 L430.500 37 Z" fill="#404040"/><rect x="457.500" y="32.500" width="15.500" height="15.500" fill="url(#gDk)"/><rect x="458" y="39" width="8.500" height="8.500" fill="#fff" stroke="#e02020" stroke-width="1.200"/><use href="#fly" x="474" y="50.500"/><rect x="557.500" y="30.500" width="7.500" height="15" fill="url(#gDk)" stroke="#202080" stroke-width="1.200"/><path d="M557.500 45 q4 5 7.500 0" fill="#c8c8d8" stroke="#6060a0" stroke-width="0.800"/><circle cx="561.300" cy="45.500" r="1.800" fill="#f02020"/><rect x="569" y="30.500" width="7.500" height="10" fill="#d0d0d8" stroke="#202080" stroke-width="1.200"/><path d="M569 40.500 q4 5 7.500 0" fill="#e0e0e8" stroke="#6060a0" stroke-width="0.800"/><circle cx="572.800" cy="41" r="1.800" fill="#f02020"/><use href="#fly" x="577.500" y="50.500"/><path d="M604 33 V41 M604 41 L611.500 36.500 M604 41 L598.500 43.500 M604 41 L605 47.500" stroke="#505050" stroke-width="1.500" fill="none"/><circle cx="604" cy="32.500" r="2.600" fill="#f0e040"/><circle cx="611.700" cy="36.400" r="2.300" fill="#f0f0f0"/><circle cx="598" cy="43.500" r="2.600" fill="#f0f0f0"/><circle cx="605" cy="48" r="2.400" fill="#f0f0f0"/><path d="M626.500 36.500 L639 30 L649.500 33.500 L647.500 46 L639.500 51 L628 44.500 Z" fill="#909090" stroke="#202020" stroke-width="1"/><path d="M626.500 36.500 L639 30 L649.500 33.500 L639.500 40.500 Z" fill="#fafafa" stroke="#202020" stroke-width="1"/><path d="M626.500 36.500 L639.500 40.500 L639.500 51 L628 44.500 Z" fill="url(#gLt)" stroke="#202020" stroke-width="0.800"/><path d="M636 32.500 l7 2.200 M639.500 33.500 l-3 2" stroke="#000" stroke-width="2"/><use href="#mag" x="663" y="35"/><use href="#fly" x="685" y="50.500"/><text x="678" y="38" font-family="Liberation Sans,sans-serif" font-weight="bold" font-size="11">3</text><path d="M695 46.500 H719 M695 46.500 L709.500 28.500" stroke="#000" stroke-width="1.100" fill="none"/><path d="M709 32 Q716 37 716.500 45" stroke="#000" stroke-width="1.100" fill="none"/><path d="M708 30.500 l4 1 l-2.500 2.500 z M714.500 42.500 l4 0 l-2 4 z" fill="#000"/><use href="#mag" x="695.500" y="35"/><use href="#mag" x="727.500" y="35"/><text x="738" y="38.500" font-family="Liberation Sans,sans-serif" font-weight="bold" font-size="12">%</text><use href="#mag" x="759" y="35"/><rect x="774" y="28.500" width="8" height="14.500" fill="#d8d8d8" stroke="#404040"/><path d="M774 35.700 h8" stroke="#404040"/><path d="M775.500 33.500 l2.500 -3 l2.500 3 z M775.500 38 l2.500 3 l2.500 -3 z" fill="#000"/><path d="M798 33 l4 3 M798 45 l4 -2 M799 30 v18" stroke="#404040" stroke-width="1"/></svg>
<div class="a" style="left:618px;top:652px;width:184px;height:1px;background:#808080;"></div>
<div class="a" style="left:618px;top:653px;width:184px;height:1px;background:#ececec;"></div>
<div class="vs" style="left:602px;top:660px;height:16px;"></div>
<div class="vs" style="left:674px;top:660px;height:16px;"></div>
<div class="vs" style="left:703px;top:660px;height:16px;"></div>
<div class="vs" style="left:602px;top:681px;height:19px;"></div>
<div class="vs" style="left:703px;top:682px;height:16px;"></div>
<svg class="a" style="left:575px;top:655px;" width="227" height="48" viewBox="575 655 227 48"><rect x="581" y="663" width="2" height="9" fill="#000"/><path d="M590 664.0 L583 667.5 L590 671.0 Z" fill="#000"/><path d="M597 664.0 L590 667.5 L597 671.0 Z" fill="#000"/><path d="M615.5 664.0 L608.5 667.5 L615.5 671.0 Z" fill="#000"/><rect x="616.5" y="664" width="2.0" height="7" fill="#000"/><rect x="620" y="664" width="2" height="7" fill="#000"/><rect x="631" y="661" width="14.5" height="13" fill="none" stroke="#000" stroke-width="2"/><path d="M635.5 664.0 L642 667.5 L635.5 671.0 Z" fill="#000"/><path d="M648 673 v3.5 h-3.5 z" fill="#fff"/><rect x="654" y="664" width="2" height="7" fill="#000"/><rect x="657.5" y="664" width="2.0" height="7" fill="#000"/><path d="M660 664.0 L667 667.5 L660 671.0 Z" fill="#000"/><path d="M679 664.0 L685.5 667.5 L679 671.0 Z" fill="#000"/><path d="M685.5 664.0 L692 667.5 L685.5 671.0 Z" fill="#000"/><rect x="692.5" y="663" width="2.5" height="9" fill="#000"/><rect x="584" y="685" width="1.5" height="8" fill="#000"/><path d="M590 686 L585.5 689 L590 692 Z" fill="#000"/><path d="M590 686 L594.5 689 L590 692 Z" fill="#000"/><rect x="594.5" y="685" width="1.5" height="8" fill="#000"/><rect x="669.5" y="682.5" width="9" height="15" fill="#c8c8c8" stroke="#f4f4f4"/><path d="M678.5 682 v16 h-9" fill="none" stroke="#808080"/><path d="M671 688 l3 -3.5 l3 3.5 z M671 692 l3 3.5 l3 -3.5 z" fill="#000"/><rect x="685.5" y="683.5" width="9" height="9" fill="#e0e0e0" stroke="#000"/><rect x="685" y="683" width="10" height="2.5" fill="#000"/><circle cx="693.5" cy="691.5" r="3.6" fill="#e8d8d8" stroke="#b01818" stroke-width="1.2"/><path d="M693.5 689 v2.5 h2.5" stroke="#000" fill="none"/><path d="M717.5 668.5 L723 674.5" stroke="#2020a0" stroke-width="2.4"/><circle cx="714" cy="664.7" r="4.3" fill="#e8e8f4" stroke="#2020a0" stroke-width="1.4"/><path d="M734.5 660.5 h12.5 v10.5 h-12.5 z M740.7 660.5 v10.5 M734.5 665.7 h12.5" fill="none" stroke="#a01820" stroke-width="1.2"/><path d="M737 671 L741.5 675.5" stroke="#2020a0" stroke-width="2"/><circle cx="734.6" cy="668.4" r="3.3" fill="#e0e0ee" stroke="#2020a0" stroke-width="1.3"/><path d="M754.5 663.5 v-3 h3 M766.5 660.5 h3 v3 M769.5 671.5 v3 h-3 M757.5 674.5 h-3 v-3" fill="none" stroke="#000" stroke-width="1.3"/><path d="M757.5 664 l2.5 -2.5 h7 v7.5 l-2.5 2.5" fill="#f0f0f0" stroke="#2020a0" stroke-width="1"/><path d="M764.5 664 l2.5 -2.5 v7.5 l-2.5 2.5 z" fill="#808080" stroke="#2020a0"/><rect x="757.5" y="664" width="7" height="7.5" fill="#c8c8d8" stroke="#2020a0" stroke-width="1.3"/><path d="M771.5 673 v3.5 h-3.5 z" fill="#fff"/><path d="M780.5 660.5 h12.5 v10.5 h-12.5 z M786.7 660.5 v10.5 M780.5 665.7 h12.5" fill="none" stroke="#a01820" stroke-width="1.2"/><path d="M777.5 667 l2.5 -2.5 h6.5 v7 l-2.5 2.5" fill="#d8d8e4" stroke="#2020a0"/><rect x="777.5" y="667" width="6.5" height="7.5" fill="#c8c8d8" stroke="#2020a0" stroke-width="1.3"/><path d="M796 673 v3.5 h-3.5 z" fill="#fff"/><path d="M708.5 682.5 L723.5 689.5 L708.5 696.5" fill="#b4b4b4" stroke="#000" stroke-width="1.5"/><path d="M714 685.5 q-3 4 0 8" fill="none" stroke="#000" stroke-width="1.2"/><path d="M714 685.5 L723 689.5 L714 693.5 q-3 -4 0 -8" fill="#d0d0d0"/><path d="M726 694.5 v3.5 h-3.5 z" fill="#fff"/><path d="M735 697 l-3.5 -5 q-1 -2 1 -2 l2.5 2 v-7 q1 -1.5 2 0 v-1.500 q1 -1.5 2.200 0 v1 q1 -1.5 2.200 0 v1.500 q1.200 -1.200 2.200 0.500 v6.500 q0 3 -2 5.500 z" fill="#e8e8e8" stroke="#000" stroke-width="1.1" stroke-linejoin="round"/><path d="M737 685 v5 M739.200 684 v6 M741.400 685 v5" stroke="#000" stroke-width="0.9"/><path d="M749.5 694.5 v3.500 h-3.500 z" fill="#fff"/><circle cx="761" cy="690.500" r="4.500" fill="none" stroke="#303060" stroke-width="1.1"/><path d="M761 690.500 V683 M761 690.500 H769 M761 690.500 L755 696.500" stroke="#101040" stroke-width="1.3" fill="none"/><path d="M759 685 l2 -3.500 l2 3.500 z M767.500 688.500 l3.500 2 l-3.500 2 z M754 694 v3.500 h3.500 z" fill="#000"/><path d="M772 694.500 v3.500 h-3.500 z" fill="#fff"/><rect x="778.700" y="683" width="11" height="11" fill="#c0c0d0" stroke="#2020a0" stroke-width="1.500"/><path d="M790.500 689.500 h2.500 v7 h-7 v-2" fill="none" stroke="#000" stroke-width="1.500"/><path d="M781.500 685.500 l5 5" stroke="#000" stroke-width="1" stroke-dasharray="1.500 1"/><path d="M780.700 684.700 h3 l-3 3 z" fill="#000"/></svg>
<div class="fld" style="left:604px;top:680px;width:63px;height:20px;border-width:2px 1px 1px 2px;"><span class="t" style="left:3px;top:3px;font-size:12px;">0</span></div>
<div class="a" style="left:0;top:0;width:1px;height:705px;background:#1c4a5a;"></div>
<div class="a" style="left:0;top:0;width:802px;height:1px;background:#2c5a68;"></div>
<div class="a" style="left:801px;top:0;width:1px;height:705px;background:#1c4a5a;"></div><div class="a" style="left:800px;top:1px;width:1px;height:702px;background:#f0f0f0;"></div><div class="a" style="left:799px;top:21px;width:1px;height:38px;background:#707070;"></div>
<div class="a" style="left:0;top:703px;width:802px;height:2px;background:#1c4a5a;"></div>
</body></html>
